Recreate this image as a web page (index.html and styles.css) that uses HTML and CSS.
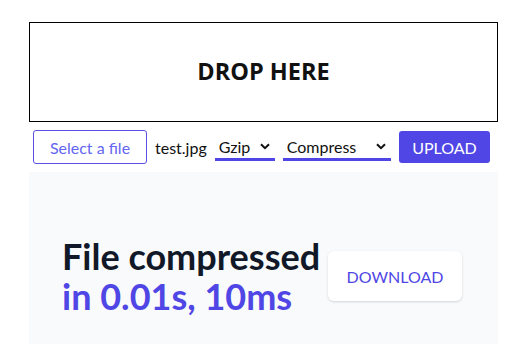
FILE: index.html
```html
<!DOCTYPE html>
<html lang="en">
<head>
    <meta charset="UTF-8">
    <meta name="viewport" content="width=device-width, initial-scale=1.0">
    <title>Compressor</title>
    <link rel="stylesheet" href="styles.css">
</head>
<body>
    <div class="container">
        <div class="dropzone">DROP HERE</div>
        <div class="toolbar">
            <button class="select-file">Select a file</button>
            <span class="file-name">test.jpg</span>
            <label class="picker picker-algo">
                <select>
                    <option>Gzip</option>
                </select>
                <svg width="10" height="7" viewBox="0 0 10 7"><path d="M1 1.2 5 5.2 9 1.2" fill="none" stroke="#111" stroke-width="2"/></svg>
            </label>
            <label class="picker picker-mode">
                <select>
                    <option>Compress</option>
                </select>
                <svg width="10" height="7" viewBox="0 0 10 7"><path d="M1 1.2 5 5.2 9 1.2" fill="none" stroke="#111" stroke-width="2"/></svg>
            </label>
            <button class="upload">UPLOAD</button>
        </div>
        <div class="result">
            <h2 class="result-title">
                <span class="line-dark">File compressed</span>
                <span class="line-accent">in 0.01s, 10ms</span>
            </h2>
            <button class="download">DOWNLOAD</button>
        </div>
    </div>
</body>
</html>
```

FILE: styles.css
```css
body {
    margin: 0;
    font-family: Lato, "Open Sans", sans-serif;
    color: #111;
    background: white;
}

.container {
    width: 469px;
    margin: 22px auto 0 29px;
}

.dropzone {
    box-sizing: border-box;
    height: 100px;
    border: 1px solid #000;
    display: flex;
    align-items: center;
    justify-content: center;
    padding-bottom: 2px;
    font-family: "Open Sans", sans-serif;
    font-size: 23.5px;
    font-weight: bold;
}

.toolbar {
    display: flex;
    align-items: center;
    gap: 8px;
    padding: 0 8px 0 4px;
    margin-top: 8px;
    height: 34px;
}

button {
    font-family: inherit;
    font-size: 16px;
    cursor: pointer;
}

.select-file {
    height: 34px;
    width: 114px;
    padding: 0;
    background: white;
    color: #6366f1;
    border: 1px solid #5b50e6;
    border-radius: 3px;
}

.file-name {
    font-size: 16px;
}

.picker {
    display: flex;
    align-items: center;
    border-bottom: 3px solid #4f46e5;
    height: 23px;
    margin-top: 2px;
    padding-right: 5px;
}

.picker select {
    appearance: none;
    -webkit-appearance: none;
    border: none;
    background: transparent;
    font-family: inherit;
    font-size: 16px;
    color: #111;
    padding: 0 0 0 4px;
    flex: 1;
    outline: none;
}

.picker-algo {
    width: 55px;
}

.picker-mode {
    width: 103px;
}

.upload {
    height: 32px;
    width: 91px;
    padding: 0;
    margin-left: auto;
    background: #4f46e5;
    color: white;
    border: none;
    border-radius: 3px;
}

.result {
    margin-top: 8px;
    background: #f9fafb;
    padding: 64px 36px 64px 33px;
    display: flex;
    align-items: center;
    justify-content: space-between;
}

.result-title {
    margin: 0;
    font-size: 36px;
    line-height: 40px;
    font-weight: 700;
    white-space: nowrap;
}

.result-title span {
    display: block;
}

.line-dark {
    color: #111827;
}

.line-accent {
    color: #4f46e5;
}

.download {
    width: 134px;
    height: 50px;
    padding: 0;
    border: none;
    border-radius: 6px;
    background: white;
    color: #4f46e5;
    box-shadow: 0 1px 3px rgba(0, 0, 0, 0.1), 0 1px 2px rgba(0, 0, 0, 0.06);
}
```
